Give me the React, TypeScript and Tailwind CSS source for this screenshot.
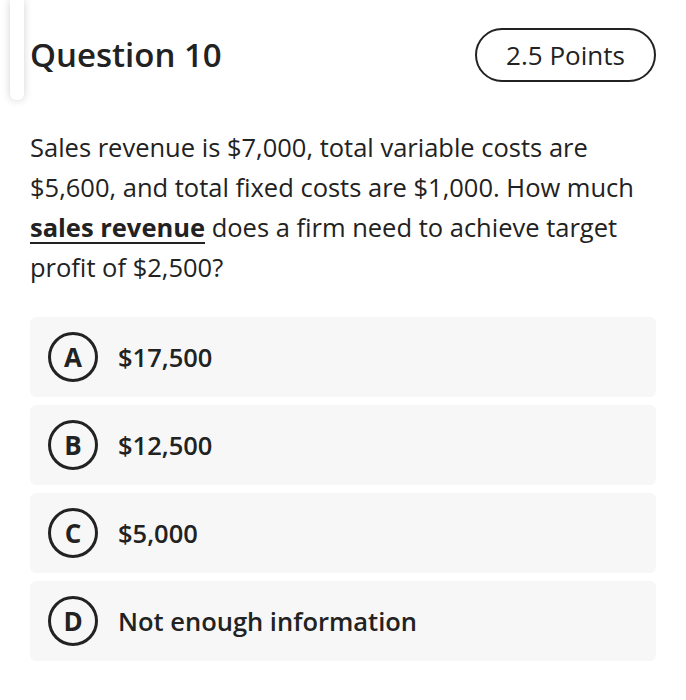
import React from 'react';

const options = [
  { letter: 'A', text: '$17,500' },
  { letter: 'B', text: '$12,500' },
  { letter: 'C', text: '$5,000' },
  { letter: 'D', text: 'Not enough information' },
];

export default function App() {
  return (
    <div
      className="relative w-[686px] h-[700px] bg-white text-[#222222] overflow-hidden"
      style={{ fontFamily: '"Open Sans", "Liberation Sans", sans-serif' }}
    >
      {/* scroll thumb */}
      <div className="absolute left-[10px] top-0 w-[14px] h-[100px] bg-white rounded-b-md shadow-[0_0_8px_rgba(0,0,0,0.18)]" />

      <div className="px-[30px] pt-[28px]">
        {/* header */}
        <div className="flex items-center justify-between h-[54px]">
          <h1 className="text-[33px] font-semibold">Question 10</h1>
          <div className="h-[54px] w-[181px] rounded-full border-2 border-[#222222] flex items-center justify-center text-[26px] font-medium">
            2.5 Points
          </div>
        </div>

        {/* question */}
        <p className="mt-[45px] text-[25.5px] leading-[40px] pr-[10px]">
          Sales revenue is $7,000, total variable costs are $5,600, and total fixed costs are $1,000. How much{' '}
          <span className="font-bold underline underline-offset-[5px] decoration-2">sales revenue</span> does a firm
          need to achieve target profit of $2,500?
        </p>

        {/* options */}
        <div className="mt-[30px] flex flex-col gap-2">
          {options.map((opt) => (
            <div
              key={opt.letter}
              className="h-[80px] rounded-md bg-[#f7f7f7] flex items-center pl-[18px]"
            >
              <div className="w-[50px] h-[50px] rounded-full border-[3px] border-[#222222] flex items-center justify-center text-[26px] font-bold shrink-0">
                {opt.letter}
              </div>
              <span className="ml-[20px] text-[25.5px] font-semibold">{opt.text}</span>
            </div>
          ))}
        </div>
      </div>
    </div>
  );
}
